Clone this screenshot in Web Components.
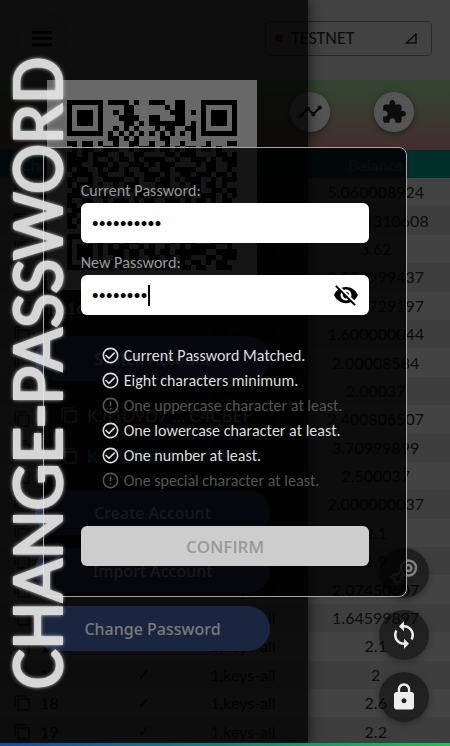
<!DOCTYPE html>
<html lang="en">
<head>
<meta charset="utf-8">
<meta name="viewport" content="width=device-width, initial-scale=1">
<title>Change password</title>
<style>
  html, body { margin: 0; height: 100%; background: #424242; }
  body { font-family: Lato, Carlito, sans-serif; font-size: 16px; color: #0c0c0c; overflow: hidden; }
</style>
</head>
<body>
<wallet-app></wallet-app>

<script>
const define = (name, html, setup) => {
  const template = document.createElement('template');
  template.innerHTML = html;
  customElements.define(name, class extends HTMLElement {
    connectedCallback() {
      if (this.shadowRoot) return;
      this.attachShadow({ mode: 'open' }).append(template.content.cloneNode(true));
      if (setup) setup(this, this.shadowRoot);
    }
  });
};

/* Round icon button */
define('icon-button', `
<style>
  :host { display: block; }
  button { width: var(--size, 40px); height: var(--size, 40px); border: 0; border-radius: 50%; padding: 0;
    display: grid; place-items: center; background: var(--fill, #555); color: var(--ink, #0c0c0c);
    box-shadow: var(--shadow, 0 2px 6px rgba(0,0,0,.4)); }
</style>
<button type="button"><slot></slot></button>`, (el, root) => {
  root.querySelector('button').setAttribute('aria-label', el.getAttribute('label'));
});

/* Header with menu and network picker */
define('top-bar', `
<style>
  :host { display: flex; align-items: center; justify-content: space-between; height: 80px; box-sizing: border-box;
    padding: 0 18px 4px 22px; background: #424242; }
  icon-button { --fill: #424242; --shadow: 0 0 3px rgba(0,0,0,.2); --ink: #060606; --size: 48px; margin-left: -4px; }
  .network { display: flex; align-items: center; width: 37%; min-width: 167px; height: 35px; box-sizing: border-box;
    padding: 0 14px 0 9px; border: 1px solid #292929; border-radius: 5px; background: none; color: #0c0c0c;
    font: 18px Carlito, Lato, sans-serif; text-align: left; }
  .dot { width: 8px; height: 8px; border-radius: 50%; background: #4a0000; margin-right: 8px; }
  .name { flex: 1; }
</style>
<icon-button label="Menu"><svg width="22" height="16" viewBox="0 0 22 16" fill="currentColor"><path d="M1 1h20v3H1zM1 7h20v3H1zM1 13h20v3H1z"/></svg></icon-button>
<button class="network" type="button"><span class="dot"></span><span class="name">TESTNET</span>
<svg width="12" height="11" viewBox="0 0 12 11" fill="none" stroke="#0c0c0c" stroke-width="1.5"><path d="M1.500 10H11V1z"/></svg></button>`);

/* Coloured strip with shortcuts */
define('shortcut-strip', `
<style>
  :host { display: flex; justify-content: flex-end; gap: 44px; height: 70px; box-sizing: border-box; padding: 12px 36px 0 0;
    background: linear-gradient(#324631, #3c3a30 50%, #442d2f); }
</style>
<icon-button label="Activity"><svg width="26" height="26" viewBox="0 0 24 24" fill="currentColor"><path d="M23 8c0 1.100-.9 2-2 2-.18 0-.35-.02-.51-.07l-3.560 3.550c.05.16.07.34.07.52 0 1.100-.9 2-2 2s-2-.9-2-2c0-.18.02-.36.07-.52l-2.550-2.550c-.16.05-.34.07-.52.07s-.36-.02-.52-.07l-4.550 4.560c.05.16.07.33.07.51 0 1.100-.9 2-2 2s-2-.9-2-2 .9-2 2-2c.18 0 .35.02.51.07l4.560-4.550C8.020 9.360 8 9.180 8 9c0-1.100.9-2 2-2s2 .9 2 2c0 .18-.02.36-.07.52l2.550 2.550c.16-.05.34-.07.52-.07s.36.02.52.07l3.550-3.560C19.020 8.350 19 8.180 19 8c0-1.100.9-2 2-2s2 .9 2 2z"/></svg></icon-button>
<icon-button label="Plugins"><svg width="26" height="26" viewBox="0 0 24 24" fill="currentColor"><path d="M20.500 11H19V7c0-1.100-.9-2-2-2h-4V3.500C13 2.120 11.880 1 10.500 1S8 2.120 8 3.500V5H4c-1.100 0-1.990.9-1.990 2v3.800H3.500c1.490 0 2.700 1.210 2.700 2.700s-1.210 2.700-2.700 2.700H2V20c0 1.100.9 2 2 2h3.800v-1.500c0-1.490 1.210-2.700 2.700-2.700 1.490 0 2.700 1.210 2.700 2.700V22H17c1.100 0 2-.9 2-2v-4h1.500c1.380 0 2.500-1.120 2.500-2.500S21.880 11 20.500 11z"/></svg></icon-button>`);

/* Chain balances */
define('balance-table', `
<style>
  :host { display: block; flex: 1; min-height: 0; }
  table { width: 100%; height: 100%; border-collapse: collapse; table-layout: fixed; }
  th, td { box-sizing: border-box; padding: 0; }
  th { height: 28px; background: #002e2a; color: #3c3c3c; font-weight: 700; }
  td { text-align: center; line-height: 20px; }
  tr:nth-child(odd) td { background: #434343; }
  tr:nth-child(even) td { background: #3e3e3e; }
  .chain { width: 23%; text-align: left; padding-left: 14px; }
  th.chain { padding-left: 20px; }
  .ok { width: 18%; } .rule { width: 26%; } .sum { width: 33%; }
  td.ok { font: 16px "DejaVu Sans", sans-serif; }
  td svg { vertical-align: -2px; margin-right: 6px; }
</style>
<table>
  <thead><tr><th class="chain">Chain</th><th class="ok"></th><th class="rule">Predicate</th><th class="sum">Balance</th></tr></thead>
  <tbody></tbody>
</table>`, (el, root) => {
  const sums = ['5.060008924', '5.0024310608', '3.62', '2.199999437', '2.001729197', '1.600000044', '2.00008584', '2.00037',
    '2.400806507', '3.70999899', '2.500037', '2.000000037', '2.1', '1.9', '2.07450607', '1.64599897', '2.1', '2', '2.6', '2.2'];
  const copy = '<svg width="16" height="16" viewBox="0 0 16 16" fill="none" stroke="#000"><path d="M1 12V1h12"/><rect x="4" y="4" width="11" height="11"/></svg>';
  root.querySelector('tbody').innerHTML = sums.map((s, i) =>
    `<tr><td class="chain">${copy} ${i}</td><td class="ok">✓</td><td>1,keys-all</td><td>${s}</td></tr>`).join('');
});

/* QR code of the account */
define('qr-code', `
<style>
  :host { display: block; width: 170px; padding: 20px; background: #686868; }
  svg { display: block; width: 100%; height: auto; }
</style>
<svg viewBox="0 0 33 33" role="img" aria-label="Account QR code" shape-rendering="crispEdges"><path/></svg>`, (el, root) => {
  const rows = [
    '#######.####.#..###..##...#######',
    '#.....#....##......#.##...#.....#',
    '#.###.#..#.##.......###.#.#.###.#',
    '#.###.#...####..##...##...#.###.#',
    '#.###.#....##.#.#######.#.#.###.#',
    '#.....#..#.#.#...#.##..##.#.....#',
    '#######.#.#.#.#.#.#.#.#.#.#######',
    '........##.#.#....##....#........',
    '##.##.#..#..##..#..#..#....#...##',
    '.#.##..###..#.###.##.#.##.##.#...',
    '##.#.###..#..##....##.###....##.#',
    '####.#..#.##.#.####..#..###.#.###',
    '###..###.#..###.#.###....#.##..##',
    '#.##..#.##.#..##..##.####..##..#.',
    '.####.##...##..###.#..##.###.##.#',
    '##..#..####..#.##.##.#.###..#.###',
    '#.###.#..#.###...###..#.##.##.#..',
    '.##..##.##..#.##.#..###.##..##.##',
    '###.#.###.#..##.###.#.##..###.#.#',
    '#..##..#.###.#.##..###.#.##.#.##.',
    '##.#.#####..##..#.##..##.#####..#',
    '.####.#..#.##.#.###.#.##..#..#.##',
    '##..#.###.##..##.#.##.#.#####.##.',
    '#.##.##..#.#.###..##.###.#.#..###',
    '##.####.##.###.#.##..#..######.##',
    '........#.##..#.#..##...#...#.###',
    '#######.##..#.##.#.#..###.#.#.##.',
    '#.....#..#.###......#.###...####.',
    '#.###.#.#.##..#.#..#..#.#####..#.',
    '#.###.#.###.##.##.##.######..####',
    '#.###.#..##.##..##.##.##...##.###',
    '#.....#.##.#.###.#.##.#.##.#.##..',
    '#######.#.##..##.###..##.##..###.'];
  let d = '';
  rows.forEach((r, y) => [...r].forEach((c, x) => { if (c === '#') d += `M${x} ${y}h1v1h-1z`; }));
  root.querySelector('path').setAttribute('d', d);
});

define('pill-button', `
<style>
  :host { display: block; align-self: stretch; }
  button { width: 100%; height: 45px; border: 0; border-radius: 23px; background: #1a2540; color: #7a7a7a;
    font: 500 16px "Noto Sans", sans-serif; }
</style>
<button type="button"><slot></slot></button>`);

define('account-key', `
<style>
  :host { display: flex; align-items: center; gap: 10px; height: 24px; padding-left: 26px; align-self: stretch; white-space: nowrap;
    color: #5c5c5c; font-size: 17px; }
  :host([current]) { color: #00615a; }
</style>
<svg width="16" height="16" viewBox="0 0 16 16" fill="none" stroke="#666"><path d="M1 12V1h12"/><rect x="4" y="4" width="11" height="11"/></svg>
<span><slot></slot></span>`);

/* Account drawer */
define('account-drawer', `
<style>
  :host { position: absolute; inset: 0 auto 0 0; width: 308px; max-width: 80%; box-sizing: border-box; padding: 80px 38px 0 35px;
    display: flex; flex-direction: column; gap: 13px; background: rgba(0,0,0,.79); box-shadow: 0 0 14px rgba(0,0,0,.7); }
  qr-code { margin-left: 12px; }
  .name { height: 20px; line-height: 10px; padding-left: 12px; color: #707070; }
  .keys { display: grid; gap: 17px; padding: 9px 0; }
</style>
<qr-code></qr-code>
<div class="name">ice1655</div>
<pill-button>Switch Account</pill-button>
<div class="keys">
  <account-key>K:81D9D7 … C4CBEF</account-key>
  <account-key current>K:3B5B8D … A87F2C</account-key>
</div>
<pill-button>Create Account</pill-button>
<pill-button>Import Account</pill-button>
<pill-button>Change Password</pill-button>`);

/* Floating actions */
define('float-actions', `
<style>
  :host { position: absolute; right: 21px; bottom: 24px; display: grid; gap: 12px; }
  icon-button { --size: 50px; --fill: rgba(0,0,0,.5); --ink: #eee; --shadow: 0 2px 6px rgba(0,0,0,.3); }
</style>
<icon-button label="Keys"><svg width="30" height="30" viewBox="0 0 30 30" fill="none" stroke="#808080" stroke-width="2.500"><circle cx="19.500" cy="10" r="7.500"/><circle cx="19.500" cy="10" r="3"/><path stroke="#5a5a5a" d="M12.500 12.500L8 17l-2-1-4 3 3 1 1 3 2 3 5-5-1-2 4-3"/></svg></icon-button>
<icon-button label="Refresh"><svg width="30" height="30" viewBox="0 0 24 24" fill="currentColor"><path d="M12 4V1L8 5l4 4V6c3.310 0 6 2.690 6 6 0 1.010-.25 1.970-.7 2.800l1.460 1.460C19.540 15.030 20 13.570 20 12c0-4.420-3.580-8-8-8zm0 14c-3.310 0-6-2.690-6-6 0-1.010.25-1.970.7-2.800L5.240 7.740C4.460 8.970 4 10.430 4 12c0 4.420 3.580 8 8 8v3l4-4-4-4v3z"/></svg></icon-button>
<icon-button label="Lock"><svg width="30" height="30" viewBox="0 0 24 24" fill="currentColor"><path d="M18 8h-1V6c0-2.760-2.240-5-5-5S7 3.240 7 6v2H6c-1.100 0-2 .9-2 2v10c0 1.100.9 2 2 2h12c1.100 0 2-.9 2-2V10c0-1.100-.9-2-2-2zm-6 9c-1.100 0-2-.9-2-2s.9-2 2-2 2 .9 2 2-.9 2-2 2zm3.100-9H8.900V6c0-1.710 1.390-3.100 3.100-3.100 1.710 0 3.100 1.390 3.100 3.100v2z"/></svg></icon-button>`);

/* Labelled password box */
define('password-field', `
<style>
  :host { display: block; }
  label { display: block; color: #999; font: 16px/24px Carlito, Lato, sans-serif; font-kerning: none; }
  .box { position: relative; display: flex; align-items: center; height: 40px; border-radius: 6px; background: #fff; }
  input { flex: 1; min-width: 0; height: 100%; box-sizing: border-box; border: 0; outline: 0; background: none; padding: 0 11px;
    color: #000; font: 14px Carlito, Lato, sans-serif; }
  .caret { position: absolute; left: 67px; top: 10px; width: 2px; height: 21px; background: #000; }
  .toggle { border: 0; padding: 0; background: none; margin-right: 10px; height: 26px; }
  [hidden] { display: none; }
</style>
<label for="field"></label>
<div class="box"><input id="field" type="password"><span class="caret" hidden></span>
<button class="toggle" type="button" aria-label="Show password" hidden><svg width="26" height="26" viewBox="0 0 24 24"><path d="M12 7c2.760 0 5 2.240 5 5 0 .65-.13 1.260-.36 1.830l2.920 2.920c1.510-1.260 2.700-2.890 3.430-4.750-1.730-4.390-6-7.500-11-7.500-1.400 0-2.740.25-3.980.7l2.160 2.160C10.740 7.130 11.350 7 12 7zM2 4.270l2.280 2.280.46.46C3.080 8.300 1.780 10.020 1 12c1.730 4.390 6 7.500 11 7.500 1.550 0 3.030-.3 4.380-.84l.42.42L19.730 22 21 20.730 3.270 3 2 4.270zM7.530 9.800l1.550 1.550c-.05.21-.08.43-.08.65 0 1.660 1.340 3 3 3 .22 0 .44-.03.65-.08l1.550 1.550c-.67.33-1.410.53-2.200.53-2.760 0-5-2.240-5-5 0-.79.2-1.530.53-2.200zm4.310-.78l3.150 3.150.02-.16c0-1.660-1.340-3-3-3l-.17.01z"/></svg></button></div>`, (el, root) => {
  root.querySelector('label').textContent = el.getAttribute('label');
  root.querySelector('input').value = el.getAttribute('value');
  if (el.hasAttribute('active')) {
    root.querySelector('.caret').hidden = false;
    root.querySelector('.toggle').hidden = false;
  }
});

/* One password rule */
define('rule-item', `
<style>
  :host { display: flex; align-items: center; gap: 4px; height: 25px; color: #555; font: 16px/25px Carlito, Lato, sans-serif;
    font-kerning: none; white-space: nowrap; }
  :host([done]) { color: #ddd; }
  svg { flex: none; width: 19px; height: 19px; fill: currentColor; }
  :host([done]) .todo, :host(:not([done])) .done { display: none; }
</style>
<svg class="done" viewBox="0 0 24 24"><path d="M16.590 7.580L10 14.170l-3.590-3.580L5 12l5 5 8-8zM12 2C6.480 2 2 6.480 2 12s4.480 10 10 10 10-4.480 10-10S17.520 2 12 2zm0 18c-4.420 0-8-3.580-8-8s3.580-8 8-8 8 3.580 8 8-3.580 8-8 8z"/></svg>
<svg class="todo" viewBox="0 0 24 24"><path d="M11 15h2v2h-2zm0-8h2v6h-2zm.99-5C6.470 2 2 6.480 2 12s4.470 10 9.990 10C17.520 22 22 17.520 22 12S17.520 2 11.990 2zM12 20c-4.420 0-8-3.580-8-8s3.580-8 8-8 8 3.580 8 8-3.580 8-8 8z"/></svg>
<span><slot></slot></span>`);

/* Dialog */
define('password-dialog', `
<style>
  :host { position: absolute; inset: 0; display: grid; place-items: center; padding-bottom: 2px; }
  form { box-sizing: border-box; width: 81%; max-width: 480px; padding: 31px 37px 30px; border: 1px solid #a5a5a5; border-radius: 8px;
    background: rgba(0,0,0,.8); }
  password-field + password-field { margin-top: 8px; }
  .rules { margin: 28px 0 33px 20px; }
  .confirm { width: 100%; height: 40px; border: 0; border-radius: 6px; background: #cdcdcd; color: #999; font: 600 17px "Open Sans", sans-serif; }
  h1 { position: absolute; left: 0; top: 0; bottom: 0; margin: 0; width: 74px; display: grid; place-items: center;
    writing-mode: vertical-rl; transform: rotate(180deg); white-space: nowrap;
    font: 400 75px/74px Carlito, Lato, sans-serif; color: #e6e6e6; -webkit-text-stroke: 2px #e6e6e6;
    text-shadow: 0 0 5px #fff, 0 0 3px #ddd; opacity: .93; }
</style>
<form>
  <password-field label="Current Password:" value="Passw0rd12"></password-field>
  <password-field label="New Password:" value="passw0rd" active></password-field>
  <div class="rules">
    <rule-item done>Current Password Matched.</rule-item>
    <rule-item done>Eight characters minimum.</rule-item>
    <rule-item>One uppercase character at least.</rule-item>
    <rule-item done>One lowercase character at least.</rule-item>
    <rule-item done>One number at least.</rule-item>
    <rule-item>One special character at least.</rule-item>
  </div>
  <button class="confirm" type="button">CONFIRM</button>
</form>
<h1>CHANGE-PASSWORD</h1>`);

define('wallet-app', `
<style>
  :host { position: relative; display: flex; flex-direction: column; height: 100vh; overflow: hidden; }
  .line { position: absolute; inset: auto 0 0 0; height: 3px; background: linear-gradient(90deg, #0d4fa8, #0b8378 50%, #1fc055); }
</style>
<top-bar></top-bar>
<shortcut-strip></shortcut-strip>
<balance-table></balance-table>
<float-actions></float-actions>
<account-drawer></account-drawer>
<password-dialog></password-dialog>
<div class="line"></div>`);
</script>
</body>
</html>
